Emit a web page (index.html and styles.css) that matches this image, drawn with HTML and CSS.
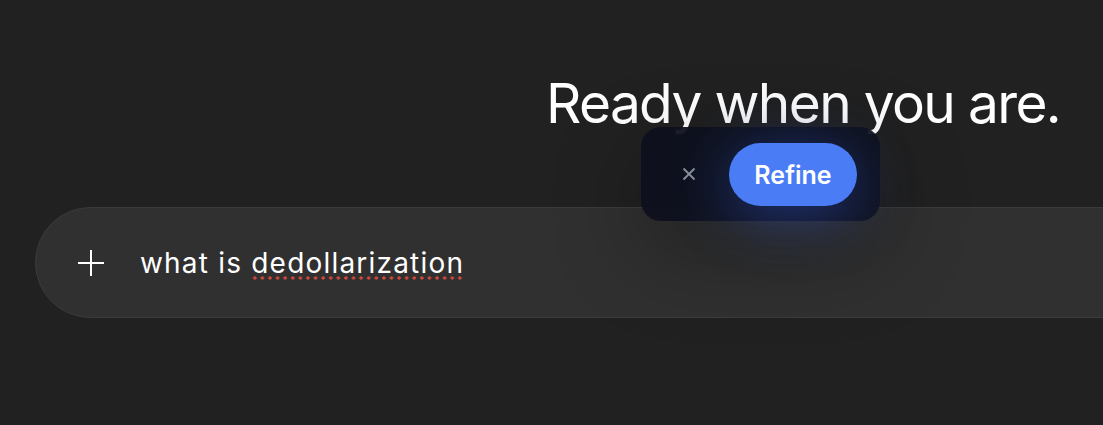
FILE: index.html
```html
<!DOCTYPE html>
<html lang="en">
<head>
    <meta charset="UTF-8">
    <title>Ready when you are</title>
    <meta name="viewport" content="width=device-width, initial-scale=1.0">
    <link rel="stylesheet" href="styles.css">
</head>
<body>
    <main class="page">
        <h1 class="title">Ready when you are.</h1>

        <div class="composer">
            <button class="add" aria-label="Add">
                <svg width="28" height="28" viewBox="0 0 28 28">
                    <path d="M14 1v26M1 14h26" stroke="#fff" stroke-width="2" fill="none"/>
                </svg>
            </button>
            <div class="prompt">what is <span class="misspelled">dedollarization</span></div>
        </div>

        <div class="refine-bar">
            <button class="dismiss" aria-label="Close">
                <svg width="14" height="14" viewBox="0 0 14 14">
                    <path d="M1.5 1.5l11 11M12.5 1.5l-11 11" stroke="#8b909b" stroke-width="1.8" fill="none"/>
                </svg>
            </button>
            <button class="refine">Refine</button>
        </div>
    </main>
</body>
</html>
```

FILE: styles.css
```css
* { box-sizing: border-box; }
html, body { margin: 0; height: 100%; }
body {
    background: #212121;
    color: #fff;
    font-family: Inter, "Noto Sans", sans-serif;
    overflow: hidden;
}
button { font-family: inherit; border: none; cursor: pointer; }

.page {
    position: relative;
    width: 1571px;
    padding: 70px 0 0 35px;
}
.title {
    margin: 0 0 71px;
    text-align: center;
    font-size: 55px;
    font-weight: 400;
    line-height: 66px;
    letter-spacing: -1.65px;
}

.composer {
    display: flex;
    align-items: center;
    gap: 35px;
    height: 111px;
    padding-left: 41px;
    background: #303030;
    border: 1px solid #3b3b3b;
    border-radius: 56px;
}
.add {
    display: flex;
    padding: 0;
    background: none;
}
.prompt {
    font-size: 28px;
    line-height: 34px;
    letter-spacing: 1.2px;
    color: #fff;
}
/* spell-check dots */
.misspelled {
    background-image: radial-gradient(circle, #d0483c 1.4px, transparent 1.9px);
    background-size: 7.6px 4px;
    background-repeat: repeat-x;
    background-position: 0 100%;
}

/* floating refine toolbar */
.refine-bar {
    position: absolute;
    left: 641px;
    top: 127px;
    width: 239px;
    height: 94px;
    display: flex;
    align-items: center;
    gap: 33px;
    padding-left: 41px;
    border-radius: 20px;
    background: rgba(13, 16, 29, 0.94);
    box-shadow: 0 30px 90px rgba(0, 0, 0, 0.3);
}
.dismiss {
    display: flex;
    padding: 0;
    background: none;
}
.refine {
    width: 128px;
    height: 63px;
    padding-top: 2px;
    border-radius: 32px;
    background: #4a7cf6;
    color: #fff;
    font-size: 25px;
    font-weight: 600;
    box-shadow: 0 10px 60px rgba(60, 100, 240, 0.45);
}
```
